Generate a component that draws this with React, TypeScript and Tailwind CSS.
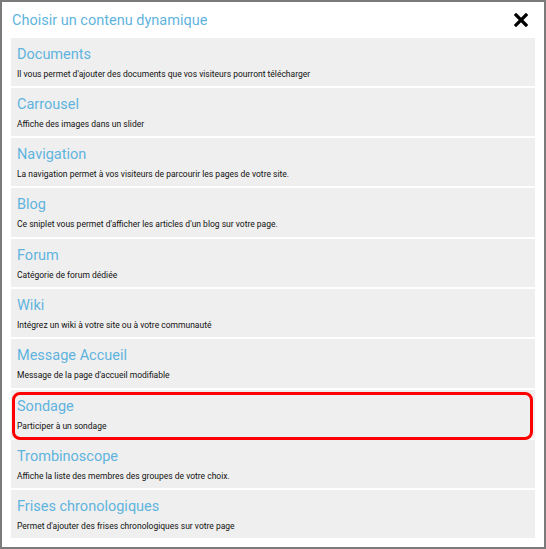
const items = [
  { title: "Documents", desc: "Il vous permet d'ajouter des documents que vos visiteurs pourront télécharger" },
  { title: "Carrousel", desc: "Affiche des images dans un slider" },
  { title: "Navigation", desc: "La navigation permet à vos visiteurs de parcourir les pages de votre site." },
  { title: "Blog", desc: "Ce sniplet vous permet d'afficher les articles d'un blog sur votre page." },
  { title: "Forum", desc: "Catégorie de forum dédiée" },
  { title: "Wiki", desc: "Intégrez un wiki à votre site ou à votre communauté" },
  { title: "Message Accueil", desc: "Message de la page d'accueil modifiable" },
  { title: "Sondage", desc: "Participer à un sondage", highlight: true },
  { title: "Trombinoscope", desc: "Affiche la liste des membres des groupes de votre choix." },
  { title: "Frises chronologiques", desc: "Permet d'ajouter des frises chronologiques sur votre page" },
];

export default function App() {
  return (
    <div className="w-[546px] h-[549px] border-2 border-[#7b7b7b] bg-white font-['Roboto',sans-serif] overflow-hidden">
      <div className="flex items-center justify-between h-[35.5px] pl-[10px] pr-[16px]">
        <h1 className="text-[14.5px] text-[#5fb4de] leading-none mt-[2px]">Choisir un contenu dynamique</h1>
        <svg width="14" height="14" viewBox="0 0 14 14">
          <path d="M2 2 L12 12 M12 2 L2 12" stroke="#000" strokeWidth="3.2" strokeLinecap="square" />
        </svg>
      </div>
      <div className="flex flex-col gap-[2px] px-[9px]">
        {items.map((it) => (
          <div key={it.title} className="relative h-[48.3px] bg-[#efefef] pl-[6px] pt-[8px]">
            <div className="text-[14.5px] leading-[18px] text-[#5fb4de]">{it.title}</div>
            <div className="mt-[5px] text-[8.5px] leading-[11px] text-[#111]">{it.desc}</div>
            {it.highlight && (
              <div className="absolute left-[1px] right-[2px] top-[2px] h-[48px] rounded-[8px] border-[3px] border-[#ff0000]" />
            )}
          </div>
        ))}
      </div>
    </div>
  );
}
